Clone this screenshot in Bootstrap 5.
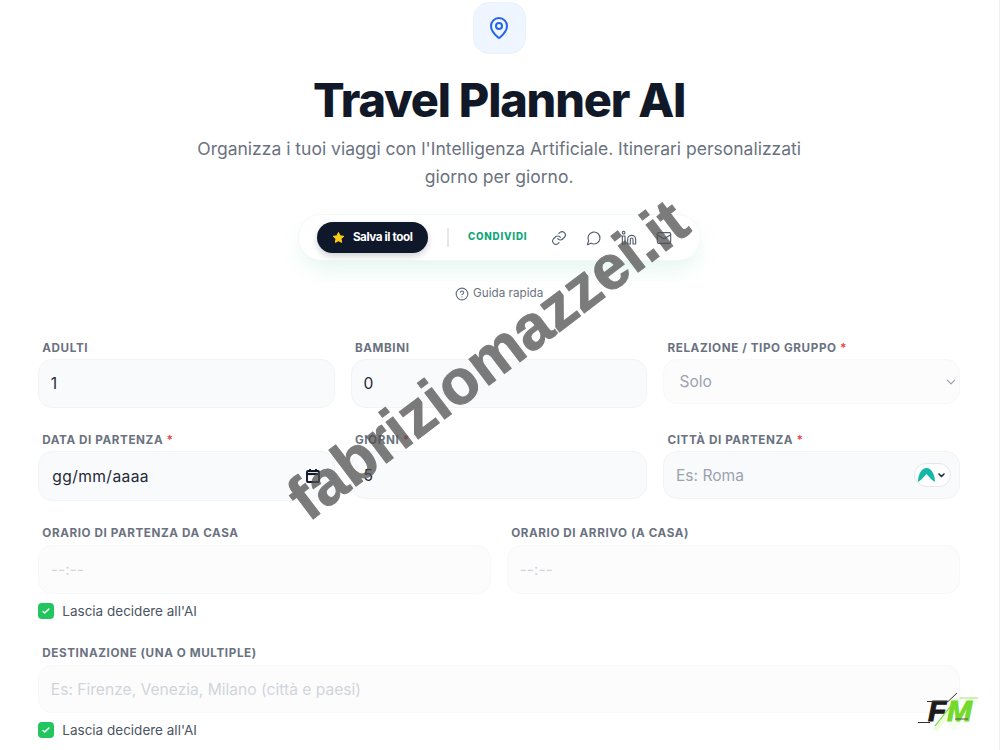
<!DOCTYPE html>
<html lang="it">
<head>
<meta charset="utf-8">
<title>Travel Planner AI</title>
<link href="https://cdn.jsdelivr.net/npm/bootstrap@5.3.0/dist/css/bootstrap.min.css" rel="stylesheet">
<style>
html,body{height:750px;overflow:hidden}
body{font-family:Inter,"Noto Sans",sans-serif;background:#fff;color:#111827}
.tp-page{width:1000px;height:750px;border-right:1px solid #eef0f2;padding:2px 39px 0 38.300px;position:relative;overflow:hidden}
.tp-logo{width:53px;height:52px;border-radius:16px;background:#eff6ff;color:#2563eb;border:1px solid #eaf2fe}
.tp-title{font-size:46.800px;line-height:48px;font-weight:800;letter-spacing:-1.170px;color:#111827;margin:22px 0 0}
.tp-sub{font-size:17.500px;line-height:28px;color:#6b7280;width:640px;margin:11px auto 0}
.tp-share{width:403px;height:47px;margin-top:23px;padding:0 0 0 18px;border-radius:24px;background:#fff;border:1px solid #f6f8f8;box-shadow:0 10px 24px -6px rgba(16,185,129,.16)}
.tp-save{width:111px;height:31px;flex:none;border-radius:16px;background:#0f172a;color:#fff;font-size:11.700px;font-weight:700;letter-spacing:-.42px;box-shadow:0 3px 6px rgba(15,23,42,.2)}
.tp-sep{width:2px;height:19px;flex:none;background:#e5e7eb;margin:0 19px}
.tp-cond{font-size:9.750px;font-weight:800;letter-spacing:.8px;color:#10a67a;width:60px;flex:none;white-space:nowrap}
.tp-icons{margin-left:14px;flex:none}
.tp-share-ic{color:#555f6d;width:35px;display:flex;justify-content:center}
.tp-guide{font-size:11.700px;color:#6b7280;margin-top:24px;height:18px}
.tp-form{margin-top:37px;display:grid;grid-template-columns:repeat(3,1fr);column-gap:16.100px}
.tp-two{grid-column:1/4;display:grid;grid-template-columns:1fr 1fr;column-gap:16px}
.tp-full{grid-column:1/4}
.tp-lab{display:block;font-size:11.700px;line-height:16px;font-weight:700;letter-spacing:.58px;text-transform:uppercase;color:#6b7280;padding-left:4px;margin:0 0 3px}
.tp-two .tp-lab,.tp-destrow .tp-lab{margin-bottom:4px}
.tp-lab i{font-style:normal;color:#ef4444}
.form-control.tp-in,.form-select.tp-in{height:49px;border-radius:14px;background-color:#f9fafb;border:1px solid #f1f3f5;font-size:15.600px;color:#1f2937;padding:0 11.500px;box-shadow:none}
.form-select.tp-in{height:45px;padding-left:15px;background-color:#fcfcfd;color:#9ca3af;border-color:#f7f8f9;background-position:right 3px center;background-size:10px 10px;background-image:url("data:image/svg+xml,%3csvg xmlns='http://www.w3.org/2000/svg' viewBox='0 0 16 16'%3e%3cpath fill='none' stroke='%239ca3af' stroke-linecap='round' stroke-linejoin='round' stroke-width='2' d='m2 5 6 6 6-6'/%3e%3c/svg%3e")}
.tp-in::placeholder{color:#9ca3af;opacity:1}
.form-control.tp-faded{background:#fcfcfd;border-color:#f7f8f9;height:49px}
.form-control.tp-dest{height:48px}
.tp-faded::placeholder{color:#d1d5db!important}
.form-control.tp-date{height:50px;padding-left:13px;letter-spacing:.4px}
.form-control.tp-city{height:48px}
.tp-dateic{position:absolute;right:14px;top:17px;line-height:0;color:#111827}
.tp-flag{position:absolute;right:9px;top:12px;width:37px;height:24px;background:#fff;border:1px solid #e5e7eb;border-radius:12px}
.tp-check{display:flex;align-items:center;gap:8px;font-size:13.500px;line-height:16px;color:#4b5563;margin-top:9px}
.tp-box{width:16px;height:16px;border-radius:4px;background:#22c55e;color:#fff;display:flex;align-items:center;justify-content:center}
.tp-r1{margin-bottom:24px}
.tp-r2{margin-bottom:24px}
.tp-destrow{margin-top:26px}
.tp-water{position:absolute;left:245.700px;top:323px;font-family:"Liberation Sans",Arial,sans-serif;font-size:62.500px;line-height:72px;font-weight:700;color:#505050;-webkit-text-stroke:1px #505050;opacity:.75;white-space:nowrap;transform:rotate(-37.200deg);pointer-events:none}
.tp-fm{position:absolute;left:915px;top:690px}
.tp-fmtext{font-family:"Liberation Sans",Arial,sans-serif;font-size:30px;font-weight:700;font-style:italic;stroke-width:1px}
</style>
</head>
<body>
<div class="tp-page">
  <div class="text-center">
    <div class="tp-logo d-flex align-items-center justify-content-center mx-auto">
      <svg width="24" height="24" viewBox="0 0 24 24" fill="none" stroke="currentColor" stroke-width="2" stroke-linecap="round" stroke-linejoin="round"><path d="M20 10c0 5-5.500 10.200-7.400 11.800a1 1 0 0 1-1.200 0C9.500 20.200 4 15 4 10a8 8 0 0 1 16 0"/><circle cx="12" cy="10" r="3"/></svg>
    </div>
    <h1 class="tp-title">Travel Planner AI</h1>
    <p class="tp-sub">Organizza i tuoi viaggi con l'Intelligenza Artificiale. Itinerari personalizzati giorno per giorno.</p>
    <div class="tp-share d-flex align-items-center mx-auto">
      <div class="tp-save d-flex align-items-center justify-content-center gap-2">
        <svg width="13" height="13" viewBox="0 0 24 24" fill="#facc15" stroke="#facc15" stroke-width="2" stroke-linejoin="round"><path d="M12 3l2.800 5.900 6.400.8-4.700 4.500 1.200 6.400L12 17.500l-5.700 3.100 1.200-6.400L2.800 9.700l6.400-.8z"/></svg>
        <span>Salva il tool</span>
      </div>
      <div class="tp-sep"></div>
      <div class="tp-cond">CONDIVIDI</div>
      <div class="d-flex tp-icons">
        <span class="tp-share-ic"><svg width="16" height="16" viewBox="0 0 24 24" fill="none" stroke="currentColor" stroke-width="1.700" stroke-linecap="round" stroke-linejoin="round"><path d="M10 13a5 5 0 0 0 7.500.5l3-3a5 5 0 0 0-7-7l-1.700 1.700"/><path d="M14 11a5 5 0 0 0-7.500-.5l-3 3a5 5 0 0 0 7 7l1.700-1.700"/></svg></span>
        <span class="tp-share-ic"><svg width="16" height="16" viewBox="0 0 24 24" fill="none" stroke="currentColor" stroke-width="1.700" stroke-linecap="round" stroke-linejoin="round"><path d="M7.900 20A9 9 0 1 0 4 16.100L2 22z"/></svg></span>
        <span class="tp-share-ic"><svg width="16" height="16" viewBox="0 0 24 24" fill="none" stroke="currentColor" stroke-width="1.700" stroke-linecap="round" stroke-linejoin="round"><path d="M16 8a6 6 0 0 1 6 6v7h-4v-7a2 2 0 0 0-4 0v7h-4v-7a6 6 0 0 1 6-6"/><path d="M2 9h4v12H2z"/><circle cx="4" cy="4" r="2"/></svg></span>
        <span class="tp-share-ic"><svg width="16" height="16" viewBox="0 0 24 24" fill="none" stroke="currentColor" stroke-width="1.700" stroke-linecap="round" stroke-linejoin="round"><rect x="2" y="4" width="20" height="16" rx="2"/><path d="M22 7l-8.970 5.700a1.940 1.940 0 0 1-2.060 0L2 7"/></svg></span>
      </div>
    </div>
    <div class="tp-guide d-flex align-items-center justify-content-center gap-1">
      <svg width="14" height="14" viewBox="0 0 24 24" fill="none" stroke="currentColor" stroke-width="2" stroke-linecap="round" stroke-linejoin="round"><circle cx="12" cy="12" r="10"/><path d="M9.100 9a3 3 0 0 1 5.800 1c0 2-3 3-3 3"/><path d="M12 17h.01"/></svg>
      <span>Guida rapida</span>
    </div>
  </div>

  <form class="tp-form">
    <div class="tp-r1"><label class="tp-lab">Adulti</label><input class="form-control tp-in" value="1"></div>
    <div class="tp-r1"><label class="tp-lab">Bambini</label><input class="form-control tp-in" value="0"></div>
    <div class="tp-r1"><label class="tp-lab">Relazione / Tipo gruppo <i>*</i></label><select class="form-select tp-in"><option>Solo</option></select></div>

    <div class="tp-r2"><label class="tp-lab">Data di partenza <i>*</i></label><div class="position-relative"><input class="form-control tp-in tp-date" value="gg/mm/aaaa"><span class="tp-dateic"><svg width="16" height="16" viewBox="0 0 16 16" fill="none" stroke="currentColor" stroke-width="1.900"><rect x="2" y="3" width="12" height="11" rx="1"/><path d="M2 6h12" stroke-width="2.200"/><path d="M5 1v3M11 1v3"/></svg></span></div></div>
    <div class="tp-r2"><label class="tp-lab">Giorni <i>*</i></label><input class="form-control tp-in tp-city" value="5"></div>
    <div class="tp-r2"><label class="tp-lab">Città di partenza <i>*</i></label><div class="position-relative"><input class="form-control tp-in tp-city" placeholder="Es: Roma"><span class="tp-flag d-flex align-items-center justify-content-center"><svg width="31" height="18" viewBox="0 0 31 18"><path d="M1 16C1 8 5 2 9.500 2S18 8 18 16l-3.500-2.500L9.500 8l-5 5.500z" fill="#14b8a6"/><path d="M22 8l2.500 2.500L27 8" fill="none" stroke="#1f2937" stroke-width="1.600" stroke-linecap="round" stroke-linejoin="round"/></svg></span></div></div>

    <div class="tp-two">
      <div><label class="tp-lab">Orario di partenza da casa</label><input class="form-control tp-in tp-faded" placeholder="--:--"></div>
      <div><label class="tp-lab">Orario di arrivo (a casa)</label><input class="form-control tp-in tp-faded" placeholder="--:--"></div>
    </div>
    <div class="tp-check tp-full"><span class="tp-box"><svg width="10" height="10" viewBox="0 0 24 24" fill="none" stroke="currentColor" stroke-width="3.500" stroke-linecap="round" stroke-linejoin="round"><path d="M5 13l4 4L19 7"/></svg></span>Lascia decidere all'AI</div>

    <div class="tp-destrow tp-full"><label class="tp-lab">Destinazione (una o multiple)</label><input class="form-control tp-in tp-faded tp-dest" placeholder="Es: Firenze, Venezia, Milano (città e paesi)"></div>
    <div class="tp-check tp-full"><span class="tp-box"><svg width="10" height="10" viewBox="0 0 24 24" fill="none" stroke="currentColor" stroke-width="3.500" stroke-linecap="round" stroke-linejoin="round"><path d="M5 13l4 4L19 7"/></svg></span>Lascia decidere all'AI</div>
  </form>

  <div class="tp-water">fabriziomazzei.it</div>
  <svg class="tp-fm" width="70" height="42" viewBox="0 0 70 42">
    <path d="M45 8L20 40" stroke="#b9f08a" stroke-width="5" opacity=".25"/>
    <path d="M61 7L36 38" stroke="#c8f5a5" stroke-width="8" opacity=".18"/>
    <text class="tp-fmtext" x="13" y="31" fill="#1c1c1c" stroke="#1c1c1c">F</text>
    <text class="tp-fmtext" x="32" y="31" fill="#73d92b" stroke="#73d92b">M</text>
    <path d="M12 11.500H33L42 3" fill="none" stroke="#333" stroke-width="1"/>
    <path d="M3 32.500H15" stroke="#333" stroke-width="1"/>
    <path d="M20 36L35 17" stroke="#73d92b" stroke-width="1.200"/>
    <path d="M45 8H63" stroke="#a6e66c" stroke-width="1"/>
    <path d="M40 29H53" stroke="#555" stroke-width="1"/>
  </svg>
</div>
<script src="https://cdn.jsdelivr.net/npm/bootstrap@5.3.0/dist/js/bootstrap.bundle.min.js"></script>
</body>
</html>
